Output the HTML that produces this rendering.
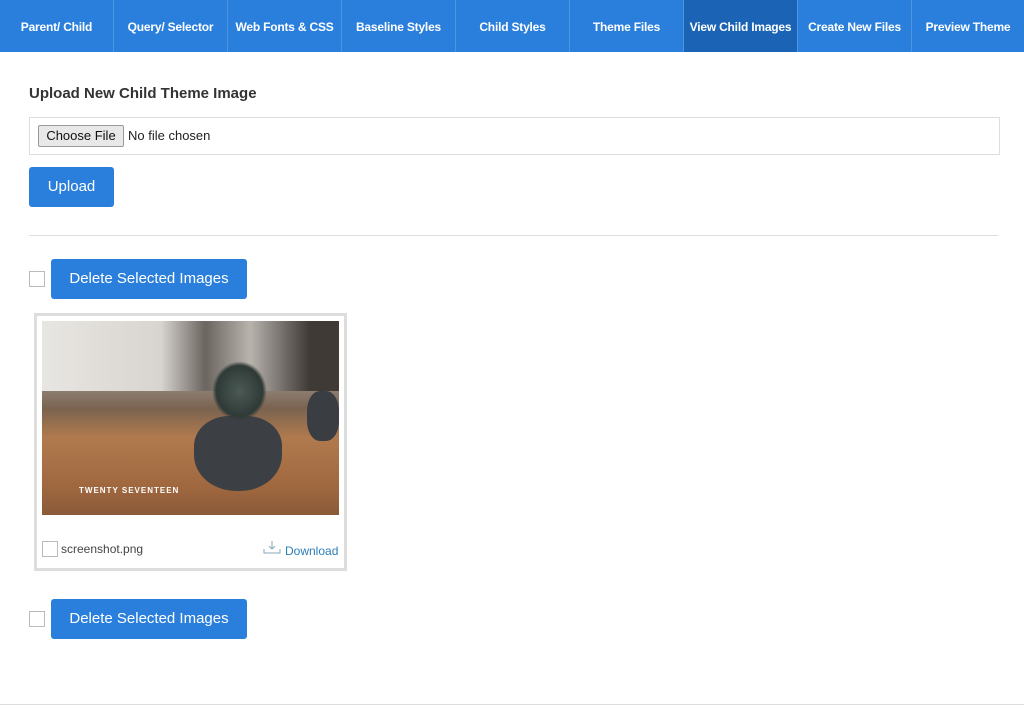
<!DOCTYPE html>
<html><head><style>
body{margin:0;width:1024px;height:708px;background:#fff;font-family:"Liberation Sans",Arial,sans-serif;position:relative;overflow:hidden}
.nav{position:absolute;left:0;top:0;width:1024px;height:52px;background:#2a7fdc;display:flex}
.nav div{width:114px;height:52px;line-height:54px;text-align:center;color:#fff;font-weight:bold;font-size:12px;border-right:1px solid #4b95e3;box-sizing:border-box;white-space:nowrap;letter-spacing:-0.2px}
.nav div.a{background:#1b63b4}
.abs{position:absolute}
.btn{position:absolute;background:#2a7fdc;color:#fff;border-radius:3px;text-align:center;font-size:15px}
.cb{position:absolute;width:14px;height:14px;border:1px solid #bbb;background:#fff}
</style></head><body>
<div class="nav"><div>Parent/ Child</div><div>Query/ Selector</div><div>Web Fonts &amp; CSS</div><div>Baseline Styles</div><div>Child Styles</div><div>Theme Files</div><div class="a">View Child Images</div><div>Create New Files</div><div style="width:112px;border:none">Preview Theme</div></div>
<div class="abs" style="left:29px;top:85px;font-size:15px;font-weight:bold;color:#333">Upload New Child Theme Image</div>
<div class="abs" style="left:29px;top:117px;width:969px;height:36px;border:1px solid #ddd"></div>
<div class="abs" style="left:38px;top:125px;width:84px;height:20px;border:1px solid #999;background:#e8e8e8;border-radius:2px;font-size:13px;line-height:20px;text-align:center;color:#111">Choose File</div>
<div class="abs" style="left:128px;top:128px;font-size:13px;color:#222">No file chosen</div>
<div class="btn" style="left:29px;top:167px;width:85px;height:40px;line-height:40px">Upload</div>
<div class="abs" style="left:29px;top:235px;width:969px;height:1px;background:#ddd"></div>
<div class="cb" style="left:29px;top:271px"></div>
<div class="btn" style="left:51px;top:259px;width:196px;height:40px;line-height:40px">Delete Selected Images</div>
<div class="abs" style="left:34px;top:313px;width:307px;height:252px;border:3px solid #ddd"></div>
<div class="abs" style="left:42px;top:321px;width:297px;height:194px;background:linear-gradient(180deg,#c9c2bb 0%,#9a8f86 30%,#7a6350 45%,#b07a4e 60%,#a0683f 85%,#8a5a38 100%);overflow:hidden">
<div class="abs" style="left:0;top:0;width:297px;height:70px;background:linear-gradient(90deg,#e8e6e2,#d8d4cf 40%,#6b6560 55%,#b8b3ad 70%,#3f3a36 90%)"></div>
<div class="abs" style="left:152px;top:95px;width:88px;height:75px;border-radius:40% 40% 48% 48%;background:#3c3f44"></div>
<div class="abs" style="left:170px;top:40px;width:55px;height:60px;background:radial-gradient(ellipse,#4b5a55,#2f3a37 60%,transparent 70%)"></div>
<div class="abs" style="left:265px;top:70px;width:32px;height:50px;border-radius:40%;background:#3a3d42"></div>
<div class="abs" style="left:37px;top:165px;color:#fff;font-size:8px;font-weight:bold;letter-spacing:1px">TWENTY SEVENTEEN</div>
</div>
<div class="cb" style="left:42px;top:541px"></div>
<div class="abs" style="left:61px;top:542px;font-size:12px;color:#444">screenshot.png</div>
<svg class="abs" style="left:263px;top:540px" width="18" height="14" viewBox="0 0 18 14"><path d="M9 1v8M6 6l3 3 3-3M1 9v4h16V9" fill="none" stroke="#8ab" stroke-width="1"/></svg>
<div class="abs" style="left:285px;top:544px;font-size:12px;color:#2a7fb8">Download</div>
<div class="cb" style="left:29px;top:611px"></div>
<div class="btn" style="left:51px;top:599px;width:196px;height:40px;line-height:40px">Delete Selected Images</div>
<div class="abs" style="left:0;top:704px;width:1024px;height:1px;background:#ddd"></div>
</body></html>
